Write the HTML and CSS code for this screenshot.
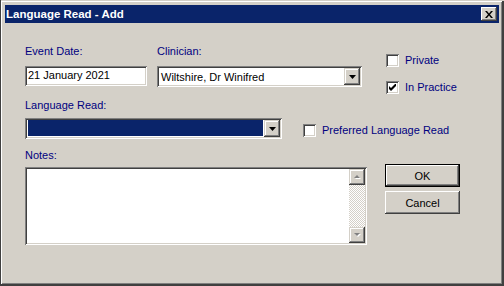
FILE: index.html
```html
<!DOCTYPE html>
<html lang="en">

<head>
    <meta charset="UTF-8">
    <meta name="viewport" content="width=device-width, initial-scale=1.0">
    <title>Language Read - Add</title>
    <link rel="stylesheet" href="styles.css">
</head>

<body>
    <div class="window">
        <div class="titlebar">
            <span class="title">Language Read - Add</span>
            <span class="close-btn">
                <svg width="8" height="7" viewBox="0 0 8 7">
                    <path d="M0 0h2l2 2.5L6 0h2L5 3.5L8 7H6L4 4.5L2 7H0l3-3.5z" fill="#000" />
                </svg>
            </span>
        </div>

        <div class="content">
            <div class="form-main">
                <div class="top-row">
                    <div class="field date-field">
                        <div class="label">Event Date:</div>
                        <div class="textbox">21 January 2021</div>
                    </div>
                    <div class="field clinician-field">
                        <div class="label">Clinician:</div>
                        <div class="combo">
                            <span class="combo-text">Wiltshire, Dr Winifred</span>
                            <span class="drop-btn">
                                <svg width="7" height="4" viewBox="0 0 7 4"><path d="M0 0h7L3.5 4z" fill="#000" /></svg>
                            </span>
                        </div>
                    </div>
                </div>

                <div class="field lang-field">
                    <div class="label">Language Read:</div>
                    <div class="lang-row">
                        <div class="combo lang-combo">
                            <span class="combo-text selected"></span>
                            <span class="drop-btn">
                                <svg width="7" height="4" viewBox="0 0 7 4"><path d="M0 0h7L3.5 4z" fill="#000" /></svg>
                            </span>
                        </div>
                        <div class="check pref-check">
                            <span class="box"></span>
                            <span class="check-label">Preferred Language Read</span>
                        </div>
                    </div>
                </div>

                <div class="field notes-field">
                    <div class="label">Notes:</div>
                    <div class="memo">
                        <div class="memo-body"></div>
                        <div class="scrollbar">
                            <span class="scroll-btn">
                                <svg width="7" height="5" viewBox="0 0 7 5"><path d="M1 4h6L4 1z" fill="#fff" /><path d="M0 3h6L3 0z" fill="#808080" /></svg>
                            </span>
                            <span class="scroll-track"></span>
                            <span class="scroll-btn">
                                <svg width="7" height="5" viewBox="0 0 7 5"><path d="M1 1h6L4 4z" fill="#fff" /><path d="M0 0h6L3 3z" fill="#808080" /></svg>
                            </span>
                        </div>
                    </div>
                </div>
            </div>

            <div class="side">
                <div class="check">
                    <span class="box"></span>
                    <span class="check-label">Private</span>
                </div>
                <div class="check">
                    <span class="box">
                        <svg width="7" height="7" viewBox="0 0 7 7"><path d="M0 2v3l2 2l5-5V-1L2 4z" fill="#000" /></svg>
                    </span>
                    <span class="check-label">In Practice</span>
                </div>
                <div class="buttons">
                    <button class="btn default">OK</button>
                    <button class="btn">Cancel</button>
                </div>
            </div>
        </div>
    </div>
</body>

</html>
```

FILE: styles.css
```css
body {
    margin: 0;
    font-family: "Liberation Sans", Arial, sans-serif;
    font-size: 11px;
    line-height: 13px;
}

.window {
    width: 504px;
    height: 286px;
    box-sizing: border-box;
    padding: 5px;
    background-color: #d4d0c8;
    box-shadow: inset 1px 0 #404040, inset 0 1px #d4d0c8,
        inset -2px -2px #404040, inset 2px 2px #ffffff,
        inset -3px -3px #808080;
}

.titlebar {
    height: 18px;
    background-color: #0a246a;
    display: flex;
    align-items: center;
    justify-content: space-between;
    padding: 0 2px 0 1px;
}

.title {
    color: white;
    font-weight: bold;
    font-size: 11.5px;
}

.close-btn {
    width: 16px;
    height: 14px;
    box-sizing: border-box;
    background-color: #d4d0c8;
    display: flex;
    align-items: center;
    justify-content: center;
    box-shadow: inset -1px -1px #404040, inset 1px 1px #ffffff, inset -2px -2px #808080;
}

.content {
    display: flex;
    gap: 18px;
    padding: 22px 0 0 20px;
}

.form-main {
    width: 342px;
    flex-shrink: 0;
}

.label {
    color: #000080;
}

.top-row {
    display: flex;
    gap: 10px;
}

.field .label {
    margin-bottom: 8px;
}

/* sunken 3d edge */
.textbox,
.combo,
.memo,
.box {
    box-sizing: border-box;
    background-color: white;
    flex-shrink: 0;
    box-shadow: inset 1px 1px #808080, inset -1px -1px #ffffff,
        inset 2px 2px #404040, inset -2px -2px #d4d0c8;
}

.textbox {
    width: 122px;
    height: 20px;
    padding: 3px 3px 0;
}

.combo {
    width: 205px;
    height: 21px;
    display: flex;
    padding: 2px;
}

.combo-text {
    flex: 1;
    padding: 3px 2px 0;
}

.combo-text.selected {
    background-color: #0a246a;
    margin: 0 1px 1px 1px;
}

.drop-btn,
.scroll-btn {
    width: 16px;
    height: 17px;
    box-sizing: border-box;
    background-color: #d4d0c8;
    display: flex;
    align-items: center;
    justify-content: center;
    box-shadow: inset -1px -1px #404040, inset 1px 1px #d4d0c8,
        inset -2px -2px #808080, inset 2px 2px #ffffff;
}

.lang-field {
    margin-top: 12px;
}

.lang-field .label {
    margin-bottom: 6px;
}

.lang-row {
    display: flex;
    align-items: flex-start;
    gap: 20px;
}

.lang-combo {
    width: 257px;
}

.pref-check {
    margin-top: 6px;
    white-space: nowrap;
}

.notes-field {
    margin-top: 10px;
}

.notes-field .label {
    margin-bottom: 5px;
}

.memo {
    width: 342px;
    height: 78px;
    padding: 2px;
    display: flex;
}

.memo-body {
    flex: 1;
}

.scrollbar {
    width: 16px;
    display: flex;
    flex-direction: column;
}

.scroll-btn {
    height: 16px;
}

.scroll-track {
    flex: 1;
    background: repeating-conic-gradient(#ffffff 0 25%, #d4d0c8 0 50%) 0 0 / 2px 2px;
}

.side {
    padding-top: 9px;
    width: 75px;
}

.check {
    display: flex;
    align-items: center;
    gap: 6px;
    color: #000080;
    margin-left: 1px;
    white-space: nowrap;
}

.side .check + .check {
    margin-top: 14px;
}

.box {
    width: 13px;
    height: 13px;
    display: flex;
    align-items: center;
    justify-content: center;
}

.buttons {
    margin-top: 70px;
    display: flex;
    flex-direction: column;
    gap: 4px;
}

.btn {
    width: 75px;
    height: 23px;
    padding: 0;
    border: none;
    background-color: #d4d0c8;
    font-family: "Liberation Sans", Arial, sans-serif;
    font-size: 11px;
    color: black;
    box-shadow: inset -1px -1px #404040, inset 1px 1px #ffffff,
        inset -2px -2px #808080, inset 2px 2px #d4d0c8;
}

.btn.default {
    box-shadow: inset 0 0 0 1px #000000, inset -2px -2px #404040,
        inset 2px 2px #ffffff, inset -3px -3px #808080;
}
```
